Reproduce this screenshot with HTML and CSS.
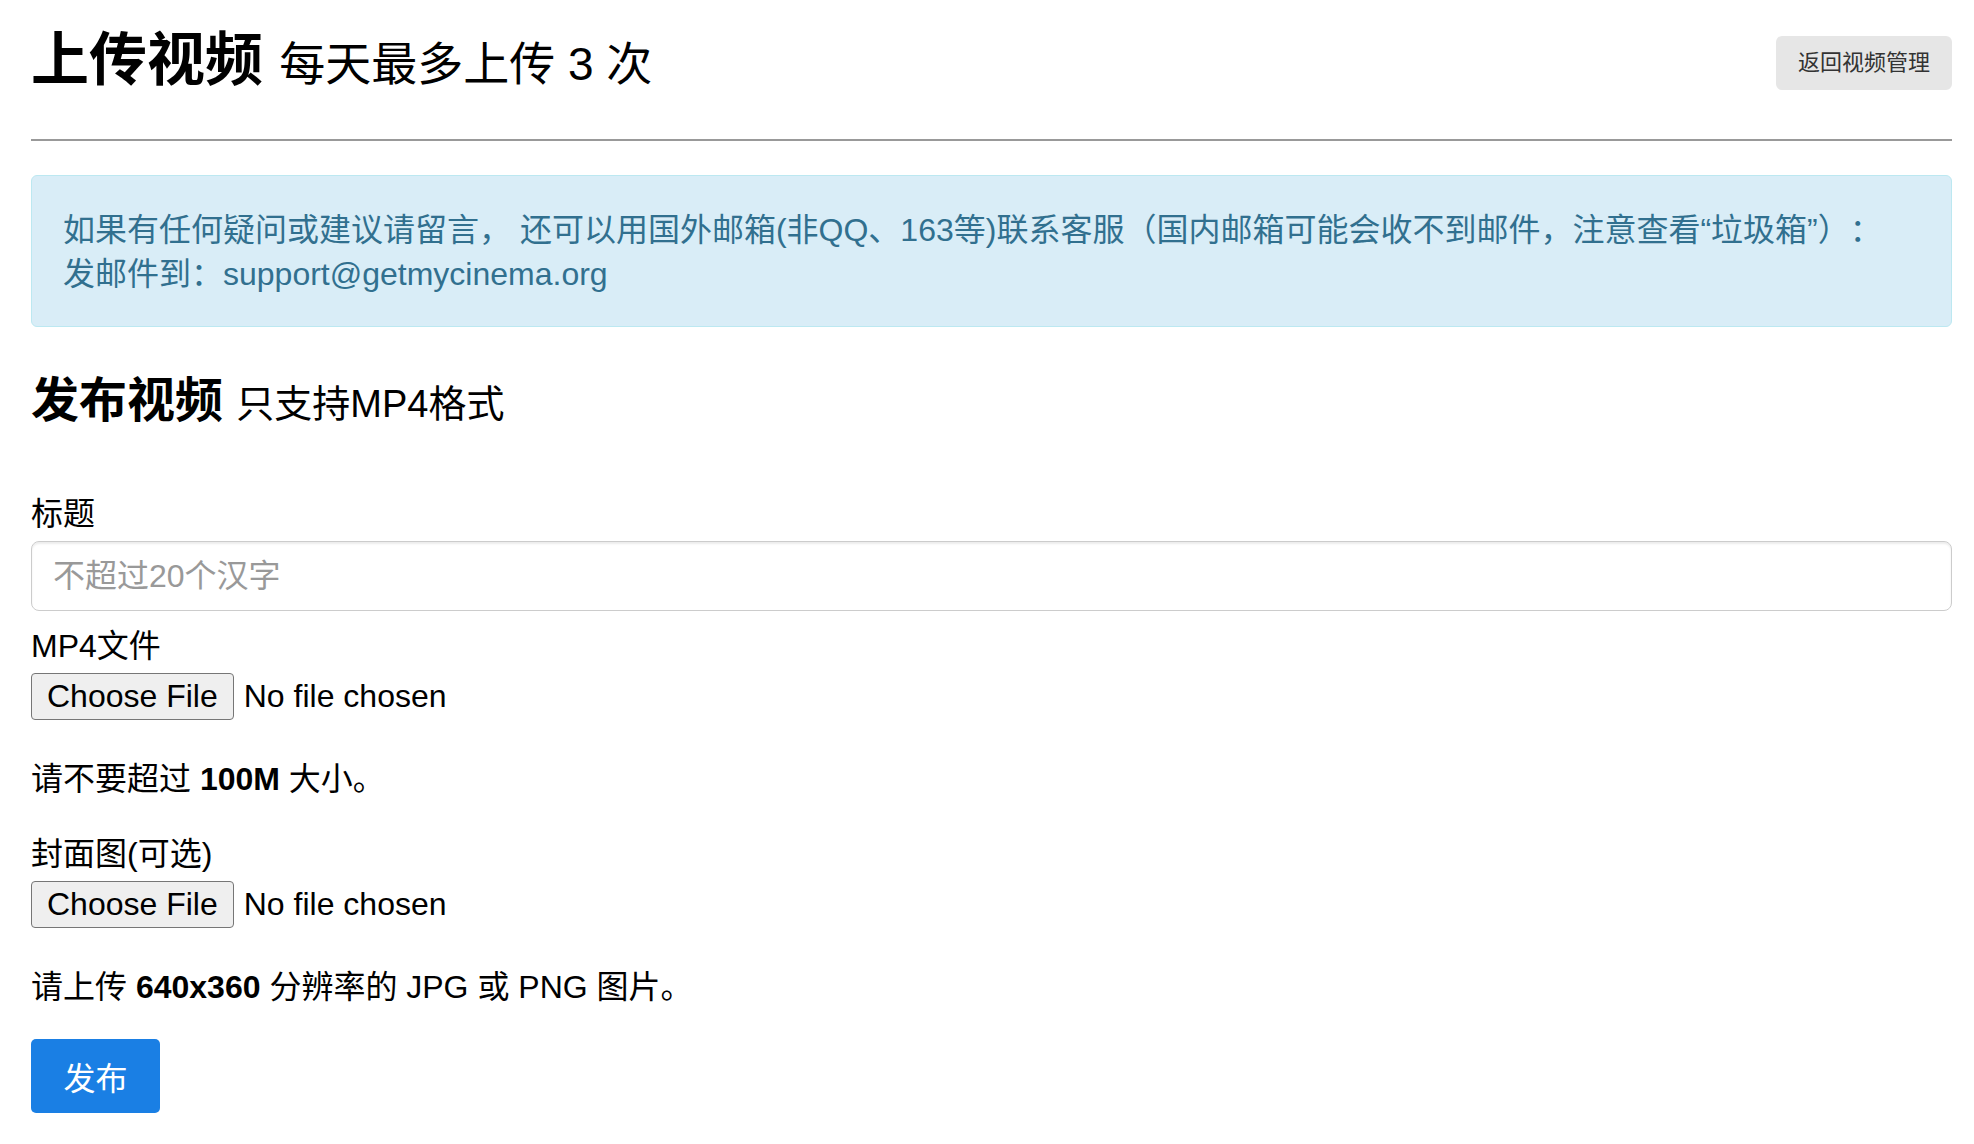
FILE: index.html
```html
<!DOCTYPE html>
<html lang="zh-CN">
<head>
<meta charset="utf-8">
<title>上传视频</title>
<link rel="stylesheet" href="styles.css">
</head>
<body>
<div class="page">
  <div class="page-header">
    <h1 class="title">上传视频 <small>每天最多上传 3 次</small></h1>
    <a class="btn-back" href="#">返回视频管理</a>
  </div>

  <div class="alert">如果有任何疑问或建议请留言， 还可以用国外邮箱(非QQ、163等)联系客服（国内邮箱可能会收不到邮件，注意查看“垃圾箱”）：<br>发邮件到：support@getmycinema.org</div>

  <h2 class="subtitle">发布视频 <small>只支持MP4格式</small></h2>

  <form class="upload-form">
    <label class="field-label" for="title">标题</label>
    <input class="text-input" id="title" type="text" placeholder="不超过20个汉字">

    <label class="field-label" for="video">MP4文件</label>
    <input class="file-input" id="video" type="file">
    <p class="help">请不要超过 <b>100M</b> 大小。</p>

    <label class="field-label" for="cover">封面图(可选)</label>
    <input class="file-input" id="cover" type="file">
    <p class="help help-last">请上传 <b>640x360</b> 分辨率的 JPG 或 PNG 图片。</p>

    <button class="btn-submit" type="button">发布</button>
  </form>
</div>
</body>
</html>
```

FILE: styles.css
```css
html, body {
  margin: 0;
  padding: 0;
  background: #fff;
}

body {
  font-family: "Liberation Sans", "Noto Sans CJK SC", sans-serif;
  font-size: 32px;
  line-height: 44px;
  color: #000;
  text-spacing-trim: space-all;
}

.page {
  padding: 0 22px 0 31px;
}

.page-header {
  display: flex;
  justify-content: space-between;
  align-items: flex-start;
  padding-top: 28px;
  padding-bottom: 43px;
  border-bottom: 2px solid #999;
}

.title {
  margin: 0;
  font-size: 58px;
  line-height: 64px;
  font-weight: bold;
}

.title small {
  font-size: 46px;
  font-weight: normal;
}

.btn-back {
  margin-top: 8px;
  height: 54px;
  padding: 0 22px;
  display: flex;
  align-items: center;
  background: #e6e6e6;
  color: #333;
  font-size: 22px;
  border-radius: 6px;
  text-decoration: none;
}

.alert {
  margin-top: 34px;
  padding: 32px 31px 30px;
  background: #d9edf7;
  border: 1px solid #bce8f1;
  border-radius: 6px;
  color: #31708f;
}

.subtitle {
  margin: 46px 0 0;
  font-size: 48px;
  line-height: 56px;
  font-weight: bold;
}

.subtitle small {
  font-size: 38px;
  font-weight: normal;
}

.upload-form {
  margin-top: 60px;
}

.field-label {
  display: block;
  margin-bottom: 5px;
}

.text-input {
  display: block;
  box-sizing: border-box;
  width: 100%;
  height: 70px;
  margin: 0 0 13px;
  padding: 0 21px;
  border: 1px solid #ccc;
  border-radius: 8px;
  box-shadow: inset 0 2px 2px rgba(0, 0, 0, 0.075);
  font-family: inherit;
  font-size: 32px;
  color: #555;
  background: #fff;
}

.text-input::placeholder {
  color: #999;
}

.file-input {
  display: block;
  height: 47px;
  margin: 0;
  padding: 0;
  font-family: "Liberation Sans", sans-serif;
  font-size: 32px;
  line-height: 47px;
  color: #000;
}

.file-input::file-selector-button {
  height: 47px;
  margin: 0 10px 0 0;
  padding: 0 15px;
  font-family: inherit;
  font-size: 32px;
  color: #000;
  background: #efefef;
  border: 1px solid #767676;
  border-radius: 4px;
}

.help {
  margin: 37px 0 31px;
}

.help-last {
  margin-bottom: 30px;
}

.help b {
  font-weight: bold;
}

.btn-submit {
  display: block;
  width: 129px;
  height: 74px;
  padding: 0;
  border: none;
  border-radius: 5px;
  background: #1a7fe4;
  color: #fff;
  font-family: inherit;
  font-size: 32px;
}
```
